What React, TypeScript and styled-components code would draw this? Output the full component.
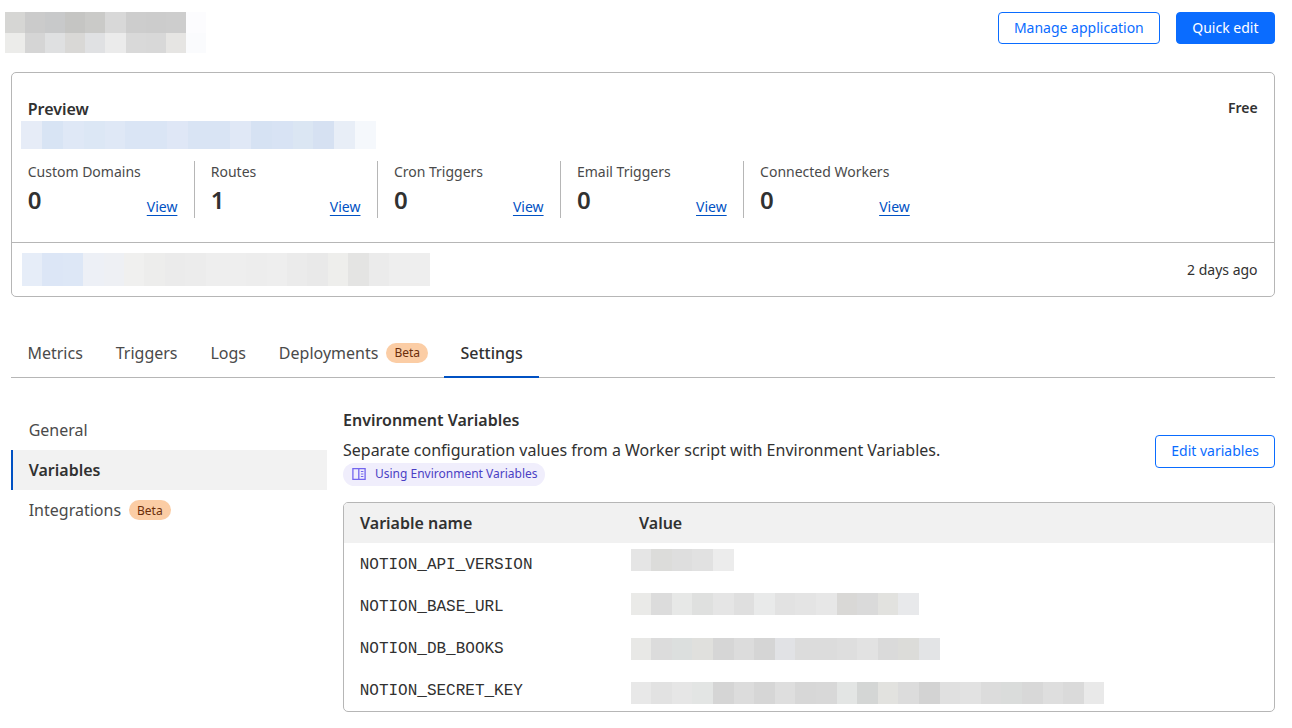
import styled, { createGlobalStyle } from 'styled-components';

const GlobalStyle = createGlobalStyle`
  html, body {
    margin: 0;
    padding: 0;
    background: #fff;
    color: #313131;
    font-family: "Noto Sans", "Liberation Sans", sans-serif;
  }
`;

const Page = styled.div`
  padding: 12px 17px 0 11px;
  height: 716px;
  overflow: hidden;
`;

const TopBar = styled.header`
  display: flex;
  justify-content: space-between;
  align-items: flex-start;
  height: 60px;
`;

const LogoBlur = styled.div`
  margin-left: -6px;
`;

const PixelRow = styled.div<{ $cell: number; $height: number; $top?: number }>`
  display: grid;
  grid-auto-flow: column;
  grid-auto-columns: ${({ $cell }) => $cell}px;
  justify-content: start;
  height: ${({ $height }) => $height}px;
  margin-top: ${({ $top }) => $top ?? 0}px;
`;

const Pixel = styled.span<{ $color: string }>`
  background: ${({ $color }) => $color};
`;

const Actions = styled.div`
  display: flex;
  gap: 16px;
`;

const Button = styled.button<{ $primary?: boolean }>`
  height: 32px;
  padding: 0 ${({ $primary }) => ($primary ? 15.5 : 15)}px 2px;
  border: 1px solid #0a6cff;
  border-radius: 4px;
  background: ${({ $primary }) => ($primary ? '#0a6cff' : '#fff')};
  color: ${({ $primary }) => ($primary ? '#fff' : '#0a6cff')};
  font: 400 14px "Noto Sans", sans-serif;
  white-space: nowrap;
`;

const Card = styled.section`
  border: 1px solid #b6b6b6;
  border-radius: 5px;
  height: 223px;
  display: flex;
  flex-direction: column;
`;

const CardMain = styled.div`
  height: 144px;
  padding: 25px 16.4px 0 9px;
  border-bottom: 1px solid #b6b6b6;
`;

const CardHead = styled.div`
  display: flex;
  justify-content: space-between;
  padding-left: 6.7px;
  height: 23px;
`;

const CardTitle = styled.h2`
  margin: 0;
  font-size: 16px;
  line-height: 22px;
  font-weight: 600;
`;

const Plan = styled.span`
  font-size: 14px;
  line-height: 18px;
  font-weight: 600;
  padding-top: 1px;
`;

const Stats = styled.div`
  display: flex;
  margin-top: 12px;
  padding-left: 6.7px;
`;

const Stat = styled.div`
  width: 150.1px;
  height: 57px;
  padding-right: 16px;
  margin-right: 16px;
  border-right: 1px solid #b6b6b6;

  &:last-child {
    border-right: 0;
  }
`;

const StatLabel = styled.div`
  font-size: 14px;
  line-height: 22px;
  color: #4a4a4a;
`;

const StatBottom = styled.div`
  display: flex;
  justify-content: space-between;
  align-items: flex-end;
  height: 30px;
  margin-top: 2px;
`;

const StatValue = styled.span`
  font-size: 24px;
  line-height: 30px;
  font-weight: 600;
`;

const ViewLink = styled.a`
  font-size: 14px;
  line-height: 18px;
  color: #0051c3;
  text-decoration: underline;
  text-underline-offset: 3px;
  margin-bottom: -1px;
  padding-right: 0.4px;
`;

const CardFoot = styled.div`
  flex: 1;
  display: flex;
  justify-content: space-between;
  align-items: center;
  padding: 0 16.4px 0 10px;
`;

const Ago = styled.span`
  font-size: 14px;
  color: #313131;
`;

const Tabs = styled.nav`
  display: flex;
  align-items: stretch;
  height: 48px;
  margin-top: 32px;
  border-bottom: 1px solid #b6b6b6;
`;

const Tab = styled.a<{ $active?: boolean }>`
  display: flex;
  align-items: center;
  gap: 8px;
  padding: 0 ${({ $active }) => ($active ? 16 : 16.45)}px;
  margin-bottom: -1px;
  font-size: 16px;
  color: ${({ $active }) => ($active ? '#313131' : '#4a4a4a')};
  font-weight: ${({ $active }) => ($active ? 500 : 400)};
  border-bottom: 2px solid ${({ $active }) => ($active ? '#0051c3' : 'transparent')};
`;

const Beta = styled.span`
  display: inline-flex;
  align-items: center;
  height: 20px;
  padding: 0 8px;
  border-radius: 10px;
  background: #fbcda5;
  color: #6b2e0a;
  font-size: 12px;
`;

const Body = styled.div`
  display: flex;
  gap: 16px;
  margin-top: 32px;
`;

const Side = styled.aside`
  width: 316px;
  flex: none;
`;

const SideItem = styled.a<{ $active?: boolean }>`
  display: flex;
  align-items: center;
  gap: 8px;
  height: 40px;
  padding-left: 15.7px;
  font-size: 16px;
  border-left: 2px solid ${({ $active }) => ($active ? '#0051c3' : 'transparent')};
  background: ${({ $active }) => ($active ? '#f2f2f2' : 'transparent')};
  font-weight: ${({ $active }) => ($active ? 600 : 400)};
  color: ${({ $active }) => ($active ? '#313131' : '#4a4a4a')};
`;

const Content = styled.main`
  flex: 1;
  min-width: 0;
`;

const Intro = styled.div`
  display: flex;
  justify-content: space-between;
  align-items: flex-start;
  height: 76px;
  margin-bottom: 16px;
`;

const IntroText = styled.div`
  display: flex;
  flex-direction: column;
  align-items: flex-start;
`;

const SectionTitle = styled.h3`
  margin: -1px 0 8px;
  font-size: 16px;
  line-height: 22px;
  font-weight: 600;
`;

const Description = styled.p`
  margin: 0 0 2px;
  font-size: 16px;
  line-height: 22px;
  color: #313131;
`;

const DocPill = styled.a`
  display: inline-flex;
  align-items: center;
  gap: 9px;
  height: 23px;
  padding: 0 7.5px 2px 9px;
  box-sizing: border-box;
  border-radius: 12px;
  background: #f0eefc;
  color: #4b3fc4;
  font-size: 12px;
`;

const EditButton = styled(Button)`
  height: 33px;
  margin-top: 25px;
`;

const VarTable = styled.div`
  border: 1px solid #b6b6b6;
  border-radius: 5px;
  overflow: hidden;
  height: 208px;
`;

const VarHead = styled.div`
  display: grid;
  grid-template-columns: 279px 1fr;
  align-items: center;
  height: 40px;
  padding-left: 16px;
  background: #f1f1f1;
  font-size: 16px;
  font-weight: 600;
`;

const VarRow = styled.div`
  display: grid;
  grid-template-columns: 271px 1fr;
  height: 42px;
  padding-left: 15.7px;
`;

const VarName = styled.span`
  font-family: "Liberation Mono", monospace;
  font-size: 16px;
  line-height: 42px;
  padding-top: 1px;
  color: #313131;
`;

const logoTop = ['#d6d6d4', '#cbcbcb', '#c8c9ca', '#c5c5c3', '#cacac8', '#d8d8d8', '#cdcdcd', '#cccccc', '#cdcdcd', '#fcfcfe'];
const logoBottom = ['#ececea', '#d5d5d5', '#dfe0e1', '#d9d8d6', '#e0e1e3', '#ebebeb', '#d9d9d9', '#d8d8d8', '#e6e5e3', '#fafbfd'];
const subdomain = ['#e6ecf7', '#d8e4f4', '#dfe8f6', '#dce7f5', '#dfe8f6', '#dae5f5', '#dae5f5', '#dfe7f6', '#d9e4f4', '#d9e4f4', '#e0e8f6', '#d6e2f3', '#d8e3f4', '#dbe6f3', '#d6e1f2', '#e8eef7', '#f5f8fc'];
const deployment = ['#e6edf8', '#dce6f6', '#dde7f6', '#edf0f6', '#eef0f4', '#f0f0ef', '#ededec', '#ebebeb', '#ececec', '#eeeeee', '#eeeeee', '#ededed', '#eeeeee', '#ebebeb', '#e9e9e9', '#eeeeec', '#e4e4e3', '#ebebeb', '#eeeeee', '#eeeeee'];

const stats = [
  { label: 'Custom Domains', value: 0 },
  { label: 'Routes', value: 1 },
  { label: 'Cron Triggers', value: 0 },
  { label: 'Email Triggers', value: 0 },
  { label: 'Connected Workers', value: 0 },
];

const variables = [
  {
    name: 'NOTION_API_VERSION',
    top: 6,
    blur: ['#e5e5e5', '#dcdcda', '#dedede', '#e1e1e1', '#ececec'],
  },
  {
    name: 'NOTION_BASE_URL',
    top: 8,
    blur: ['#eaeae8', '#dcdcdc', '#e7e8e7', '#dfe0df', '#e5e5e5', '#dfdfdf', '#e9eaea', '#e2e2e2', '#e4e4e4', '#e7e7e7', '#d9d8d6', '#dadada', '#e2e2df', '#e8e9eb'],
  },
  {
    name: 'NOTION_DB_BOOKS',
    top: 11,
    blur: ['#e8e8e6', '#dcdcdc', '#dcdfde', '#e0e0dd', '#d6d6d6', '#dcdcdc', '#d5d5d5', '#e1e2e5', '#dcdcdc', '#dcdcdc', '#dedede', '#e2e2e2', '#dadada', '#dcdcd9', '#e3e4e6'],
  },
  {
    name: 'NOTION_SECRET_KEY',
    top: 13,
    blur: ['#e8e8e8', '#e2e2e2', '#e6e6e6', '#e3e5e4', '#d5d5d5', '#dcdcdc', '#d6d6d6', '#dedede', '#d7d7d7', '#d8d8d8', '#e3e5e4', '#d4d6d5', '#e2e2df', '#dcdcdc', '#d3d3d3', '#e0e0e0', '#e2e2e2', '#dcdcdc', '#dadcdb', '#d8d8d8', '#dedede', '#dadada', '#e9e9e9'],
  },
];

function Pixels({ colors, cell, height, top }: { colors: string[]; cell: number; height: number; top?: number }) {
  return (
    <PixelRow $cell={cell} $height={height} $top={top}>
      {colors.map((c, i) => (
        <Pixel key={i} $color={c} />
      ))}
    </PixelRow>
  );
}

function BookIcon() {
  return (
    <svg width="14" height="14" viewBox="0 0 14 14" fill="none" stroke="#7366ee" strokeWidth="1.3">
      <path d="M6.8 1.6H.9v10.8h5.9" />
      <path d="M6.8 1.6h6.3v10.8H6.8z" />
      <path d="M8.9 4.5h2.5M8.9 7h2.5M8.9 9.5h2.5" strokeWidth="1.1" />
    </svg>
  );
}

export default function App() {
  return (
    <>
      <GlobalStyle />
      <Page>
        <TopBar>
          <LogoBlur>
            <Pixels colors={logoTop} cell={20.1} height={21} />
            <Pixels colors={logoBottom} cell={20.1} height={20} />
          </LogoBlur>
          <Actions>
            <Button>Manage application</Button>
            <Button $primary>Quick edit</Button>
          </Actions>
        </TopBar>

        <Card>
          <CardMain>
            <CardHead>
              <CardTitle>Preview</CardTitle>
              <Plan>Free</Plan>
            </CardHead>
            <Pixels colors={subdomain} cell={20.9} height={28} />
            <Stats>
              {stats.map((s) => (
                <Stat key={s.label}>
                  <StatLabel>{s.label}</StatLabel>
                  <StatBottom>
                    <StatValue>{s.value}</StatValue>
                    <ViewLink>View</ViewLink>
                  </StatBottom>
                </Stat>
              ))}
            </Stats>
          </CardMain>
          <CardFoot>
            <Pixels colors={deployment} cell={20.4} height={33} />
            <Ago>2 days ago</Ago>
          </CardFoot>
        </Card>

        <Tabs>
          <Tab>Metrics</Tab>
          <Tab>Triggers</Tab>
          <Tab>Logs</Tab>
          <Tab>
            Deployments <Beta>Beta</Beta>
          </Tab>
          <Tab $active>Settings</Tab>
        </Tabs>

        <Body>
          <Side>
            <SideItem>General</SideItem>
            <SideItem $active>Variables</SideItem>
            <SideItem>
              Integrations <Beta>Beta</Beta>
            </SideItem>
          </Side>
          <Content>
            <Intro>
              <IntroText>
                <SectionTitle>Environment Variables</SectionTitle>
                <Description>Separate configuration values from a Worker script with Environment Variables.</Description>
                <DocPill>
                  <BookIcon />
                  Using Environment Variables
                </DocPill>
              </IntroText>
              <EditButton>Edit variables</EditButton>
            </Intro>
            <VarTable>
              <VarHead>
                <span>Variable name</span>
                <span>Value</span>
              </VarHead>
              {variables.map((v) => (
                <VarRow key={v.name}>
                  <VarName>{v.name}</VarName>
                  <Pixels colors={v.blur} cell={20.6} height={22} top={v.top} />
                </VarRow>
              ))}
            </VarTable>
          </Content>
        </Body>
      </Page>
    </>
  );
}
